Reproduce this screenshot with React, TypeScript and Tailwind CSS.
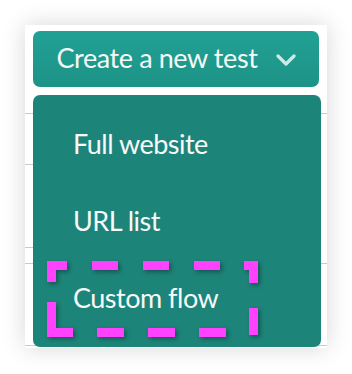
import React from 'react';

const items = ['Full website', 'URL list', 'Custom flow'];

// dashes of the highlight box, in dropdown coordinates
const dashes = [
  [14, 166, 20, 9],
  [14, 166, 9, 21],
  [59, 166, 26, 9],
  [110, 166, 26, 9],
  [161, 166, 26, 9],
  [211, 166, 14, 9],
  [216, 166, 9, 22],
  [216, 213, 9, 27],
  [166, 233, 27, 9],
  [115, 233, 27, 9],
  [64, 233, 27, 9],
  [14, 233, 26, 9],
  [14, 207, 9, 35],
];

export default function App() {
  return (
    <div className="w-[352px] h-[374px] bg-white pt-[25px] pl-[25px]" style={{ fontFamily: 'Lato, "Noto Sans", sans-serif' }}>
      {/* Card behind the menu */}
      <div className="relative w-[302px] h-[323px] bg-white shadow-[0_0_22px_rgba(0,0,0,0.16)] flex flex-col">
        <button className="mt-[6px] mx-[8px] h-[56px] rounded-[7px] bg-gradient-to-b from-[#21a194] to-[#1d9387] flex items-center justify-center gap-[18px] text-[#f4f8f7] text-[27px] tracking-[-0.4px] pb-[2px]">
          <span>Create a new test</span>
          <svg width="20" height="12" viewBox="0 0 20 12" className="mt-[3px]">
            <polyline points="2,2 10,10 18,2" fill="none" stroke="#cfeae6" strokeWidth="3.2" strokeLinecap="round" strokeLinejoin="round" />
          </svg>
        </button>

        {/* Table rows */}
        <div className="h-[27px] border-b border-[#c6cbd0]" />
        <div className="h-[51px] w-[8px] border-b border-[#c6cbd0]" />
        <div className="h-[83px] w-[8px] border-b border-[#c6cbd0]" />
        <div className="h-[16px] border-b border-[#c6cbd0]" />
        <div className="h-[82px] border-b border-[#c6cbd0]" />

        {/* Dropdown */}
        <div className="absolute left-[8px] top-[70px] w-[288px] h-[252px] rounded-[7px] bg-[#1d8479] pt-[12px] text-[#f6faf9] text-[27px] tracking-[-0.5px]">
          {items.map((label) => (
            <div key={label} className="h-[77px] flex items-center pl-[40px] pb-[3px]">
              {label}
            </div>
          ))}
          <svg className="absolute left-0 top-0 drop-shadow-[2px_2px_2px_rgba(0,0,0,0.35)]" width="288" height="252">
            {dashes.map(([x, y, w, h], i) => (
              <rect key={i} x={x} y={y} width={w} height={h} fill="#ff42ff" />
            ))}
          </svg>
        </div>
      </div>
    </div>
  );
}
